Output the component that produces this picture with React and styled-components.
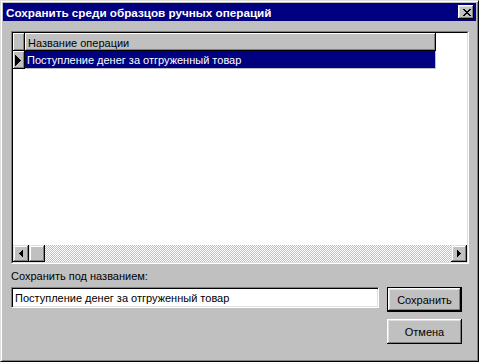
import React from "react";
import styled, { createGlobalStyle } from "styled-components";

const GlobalStyle = createGlobalStyle`
  html, body { margin: 0; padding: 0; background: #c0c0c0; }
  body {
    font-family: "Liberation Sans", Arial, sans-serif;
    font-size: 11px;
    color: #000;
  }
  * { box-sizing: border-box; }
`;

const Window = styled.div`
  width: 479px;
  height: 362px;
  background: #c0c0c0;
  border: 1px solid;
  border-color: #dfdfdf #000 #000 #dfdfdf;
  box-shadow: inset 1px 1px #fff, inset -1px -1px #808080;
  padding: 2px;
  display: flex;
  flex-direction: column;
`;

const TitleBar = styled.div`
  height: 18px;
  background: #000080;
  color: #fff;
  display: flex;
  align-items: center;
  padding: 0 2px 0 3px;
`;

const TitleText = styled.span`
  flex: 1;
  font-weight: bold;
  font-size: 11.7px;
  white-space: nowrap;
`;

const raised = `
  background: #c0c0c0;
  border: none;
  box-shadow: inset -1px -1px #000, inset 1px 1px #fff, inset -2px -2px #808080, inset 2px 2px #dfdfdf;
`;

const CloseButton = styled.div`
  ${raised}
  width: 16px;
  height: 14px;
  display: flex;
  align-items: center;
  justify-content: center;
  padding-left: 1px;
`;

const Body = styled.div`
  flex: 1;
  display: flex;
  flex-direction: column;
  padding: 10px 7px 0 8px;
`;

const FrameOuter = styled.div`
  width: 458px;
  height: 233px;
  border: 1px solid;
  border-color: #808080 #fff #fff #808080;
`;

const FrameInner = styled.div`
  height: 100%;
  border: 1px solid;
  border-color: #000 #dfdfdf #dfdfdf #000;
  background: #fff;
  display: flex;
  flex-direction: column;
`;

const Row = styled.div`
  display: flex;
  height: ${(p) => p.$h}px;
`;

const IndicatorCell = styled.div`
  ${raised}
  box-shadow: inset -1px -1px #000, inset 1px 1px #fff, inset -2px -2px #808080;
  width: 12px;
  height: 100%;
  display: flex;
  align-items: center;
  padding-left: 2px;
  padding-top: ${(p) => p.$pt || 0}px;
`;

const HeaderCell = styled.div`
  ${raised}
  box-shadow: inset -1px -1px #000, inset 1px 1px #fff, inset -2px -2px #808080;
  width: 411px;
  height: 100%;
  padding: 1px 0 0 3px;
  display: flex;
  align-items: center;
  white-space: nowrap;
`;

const DataCell = styled.div`
  width: 411px;
  height: 100%;
  background: ${(p) => (p.$selected ? "#000080" : "#fff")};
  color: ${(p) => (p.$selected ? "#fff" : "#000")};
  border-right: 1px solid #c0c0c0;
  border-bottom: 1px solid #c0c0c0;
  padding: 0 0 0 2px;
  display: flex;
  align-items: center;
  white-space: nowrap;
`;

const Spacer = styled.div`
  flex: 1;
`;

const ScrollBar = styled.div`
  display: flex;
  height: 17px;
`;

const ScrollButton = styled.div`
  background: #c0c0c0;
  box-shadow: inset -1px -1px #000, inset 1px 1px #dfdfdf, inset -2px -2px #808080, inset 2px 2px #fff;
  width: 16px;
  height: 100%;
  display: flex;
  align-items: center;
  justify-content: center;
`;

const Track = styled.div`
  flex: 1;
  background: repeating-conic-gradient(#c0c0c0 0 25%, #fff 0 50%) 0 0 / 2px 2px;
`;

const Bottom = styled.div`
  display: grid;
  grid-template-columns: 368px 75px;
  column-gap: 8px;
  margin-top: 6px;
`;

const Label = styled.div`
  grid-column: 1 / 2;
  height: 13px;
  line-height: 13px;
  margin-bottom: 4px;
  white-space: nowrap;
`;

const TextField = styled.div`
  grid-column: 1 / 2;
  height: 21px;
  align-self: start;
  border: 1px solid;
  border-color: #808080 #fff #fff #808080;
  box-shadow: inset 1px 1px #000, inset -1px -1px #dfdfdf;
  background: #fff;
  padding: 0 0 0 3px;
  display: flex;
  align-items: center;
  white-space: nowrap;
`;

const Button = styled.div`
  grid-column: 2 / 3;
  height: 25px;
  margin-top: ${(p) => p.$mt || 0}px;
  background: #c0c0c0;
  display: flex;
  align-items: center;
  justify-content: center;
  ${(p) =>
    p.$default
      ? `border: 1px solid #000;
         box-shadow: inset -1px -1px #000, inset 1px 1px #fff, inset -2px -2px #808080, inset 2px 2px #dfdfdf;`
      : `box-shadow: inset -1px -1px #000, inset 1px 1px #fff, inset -2px -2px #808080, inset 2px 2px #dfdfdf;`}
`;

const CloseGlyph = () => (
  <svg width="8" height="7" viewBox="0 0 8 7" shapeRendering="crispEdges">
    <g fill="#000">
      <rect x="0" y="0" width="2" height="1" />
      <rect x="6" y="0" width="2" height="1" />
      <rect x="1" y="1" width="2" height="1" />
      <rect x="5" y="1" width="2" height="1" />
      <rect x="2" y="2" width="4" height="1" />
      <rect x="3" y="3" width="2" height="1" />
      <rect x="2" y="4" width="4" height="1" />
      <rect x="1" y="5" width="2" height="1" />
      <rect x="5" y="5" width="2" height="1" />
      <rect x="0" y="6" width="2" height="1" />
      <rect x="6" y="6" width="2" height="1" />
    </g>
  </svg>
);

const ArrowGlyph = ({ dir }) => {
  const cols = [1, 3, 5, 7];
  return (
    <svg width="4" height="7" viewBox="0 0 4 7" shapeRendering="crispEdges">
      <g fill="#000">
        {cols.map((h, i) => {
          const x = dir === "left" ? i : 3 - i;
          return <rect key={i} x={x} y={(7 - h) / 2} width="1" height={h} />;
        })}
      </g>
    </svg>
  );
};

const RowPointer = () => {
  const cols = [11, 9, 7, 5, 3, 1];
  return (
    <svg width="6" height="11" viewBox="0 0 6 11" shapeRendering="crispEdges">
      <g fill="#000">
        {cols.map((h, i) => (
          <rect key={i} x={i} y={(11 - h) / 2} width="1" height={h} />
        ))}
      </g>
    </svg>
  );
};

export default function App() {
  const name = "Поступление денег за отгруженный товар";
  return (
    <>
      <GlobalStyle />
      <Window>
        <TitleBar>
          <TitleText>Сохранить среди образцов ручных операций</TitleText>
          <CloseButton>
            <CloseGlyph />
          </CloseButton>
        </TitleBar>
        <Body>
          <FrameOuter>
            <FrameInner>
              <Row $h={18}>
                <IndicatorCell />
                <HeaderCell>Название операции</HeaderCell>
              </Row>
              <Row $h={18}>
                <IndicatorCell $pt={1}>
                  <RowPointer />
                </IndicatorCell>
                <DataCell $selected>{name}</DataCell>
              </Row>
              <Spacer />
              <ScrollBar>
                <ScrollButton>
                  <ArrowGlyph dir="left" />
                </ScrollButton>
                <ScrollButton />
                <Track />
                <ScrollButton>
                  <ArrowGlyph dir="right" />
                </ScrollButton>
              </ScrollBar>
            </FrameInner>
          </FrameOuter>
          <Bottom>
            <Label>Сохранить под названием:</Label>
            <TextField>{name}</TextField>
            <Button $default>Сохранить</Button>
            <Button $mt={7}>Отмена</Button>
          </Bottom>
        </Body>
      </Window>
    </>
  );
}
